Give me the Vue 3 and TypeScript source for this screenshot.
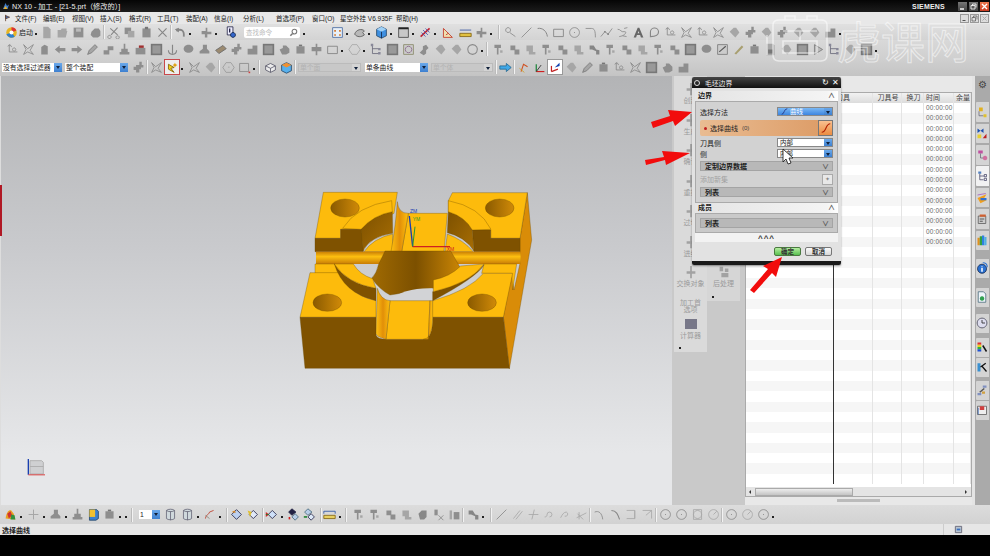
<template>
  <div class="app">
    <header class="titlebar">
      <svg class="applogo" viewBox="0 0 16 16"><path d="M2 14 7 2l3 6 4-3-3 9z" fill="#3f7fd0" /><path d="M7 8l4 6H3z" fill="#e8b030" /></svg>
      <span class="title">NX 10 - 加工 - [21-5.prt（修改的）]</span>
      <span class="siemens">SIEMENS</span>
      <span class="win">
        <svg viewBox="0 0 9 9"><path d="M2 7h4" stroke="#fff" stroke-width="1.4" /></svg>
      </span>
      <span class="win">
        <svg viewBox="0 0 9 9"><path d="M2 3.5h4v3.5H2zM3.5 3.5V2H7v3.5" fill="none" stroke="#fff" stroke-width=".8" /></svg>
      </span>
      <span class="win close">
        <svg viewBox="0 0 9 9"><path d="M2 2 7 7M7 2 2 7" stroke="#fff" stroke-width="1.4" /></svg>
      </span>
    </header>

    <nav class="menubar">
      <svg class="menuicon" viewBox="0 0 10 10"><path d="M2 1v8M2 2l5 2-5 2z" fill="#4070c0" stroke="#604030" /></svg>
      <span v-for="m in menus" :key="m.t" class="menu" :style="{ width: m.w + 'px' }">{{ m.t }}</span>
      <div class="mdi">
        <span><svg viewBox="0 0 7 7"><path d="M1.5 5.5h3" stroke="#555" /></svg></span>
        <span><svg viewBox="0 0 7 7"><path d="M1 2.5h3.5V6H1zM2.5 2.5V1H6v3.5" fill="none" stroke="#555" stroke-width=".7" /></svg></span>
        <span><svg viewBox="0 0 7 7"><path d="M1.5 1.5l4 4M5.5 1.5l-4 4" stroke="#aaa" /></svg></span>
      </div>
    </nav>

    <div v-for="(row, r) in topRows" :key="r" class="toolbar" :class="'tb' + r">
      <template v-for="(it, i) in row" :key="i">
        <span v-if="it.t === 'gap'" :style="{ width: it.w + 'px' }"></span>
        <span v-else-if="it.t === 'dot'" class="dot" :style="{ width: it.w + 'px' }"></span>
        <span v-else-if="it.t === 'sep'" class="sep"></span>
        <span v-else-if="it.t === 'start'" class="start">
          <svg viewBox="0 0 16 16" class="ic"><circle cx="8" cy="8" r="6.5" fill="#e6b422" /><path d="M8 1.5a6.5 6.5 0 0 1 6 4L8 8z" fill="#d33" /><path d="M1.8 10A6.5 6.5 0 0 0 12 13L8 8z" fill="#2c7fd0" /><circle cx="8" cy="8" r="2.5" fill="#fff" /></svg>
          启动
        </span>
        <span v-else-if="it.t === 'search'" class="search">
          <span>查找命令</span>
          <svg viewBox="0 0 10 10"><circle cx="6" cy="4" r="2.6" fill="none" stroke="#777" stroke-width="1.2" /><path d="M4 6 1.5 8.5" stroke="#777" stroke-width="1.6" /></svg>
        </span>
        <span v-else-if="it.t === 'sel'" class="sel" :class="{ off: it.off }" :style="{ width: it.w + 'px' }">
          <span class="seltxt">{{ it.text }}</span><span class="drop"></span>
        </span>
        <span v-else class="icon" :class="{ active: it.active, redbox: it.name === 'spark' }">
          <svg viewBox="0 0 16 16" class="ic">
            <path v-for="(l, k) in icons[it.name!]" :key="k" :d="l.d" :fill="l.f || 'none'" :stroke="l.s || 'none'" :stroke-width="l.w || 1" />
          </svg>
        </span>
      </template>
    </div>

    <main class="main">
      <section class="viewport">
        <span class="redmark"></span>
        <svg class="model" viewBox="0 0 750 600">
          <defs>
            <linearGradient id="hole" x1="0" x2="1" y1="0" y2="0">
              <stop offset="0" stop-color="#8a5a00" /><stop offset="1" stop-color="#d08a08" />
            </linearGradient>
            <linearGradient id="chan" x1="0" x2="0" y1="0" y2="1">
              <stop offset="0" stop-color="#c97e05" /><stop offset=".4" stop-color="#fdc010" /><stop offset="1" stop-color="#c87c05" />
            </linearGradient>
            <linearGradient id="slot" x1="0" x2="1" y1="0" y2="0">
              <stop offset="0" stop-color="#fdc010" /><stop offset=".5" stop-color="#e28f08" /><stop offset="1" stop-color="#fdc010" />
            </linearGradient>
            <linearGradient id="bore" x1="0" x2="1" y1="0" y2="0">
              <stop offset="0" stop-color="#a06a02" /><stop offset=".5" stop-color="#7c5000" /><stop offset="1" stop-color="#c98505" />
            </linearGradient>
            <linearGradient id="wall" x1="0" x2="1" y1="0" y2="1">
              <stop offset="0" stop-color="#7c5000" /><stop offset="1" stop-color="#a86e04" />
            </linearGradient>
          </defs>
          <g stroke="#6b4800" stroke-width="1">
            <path d="M690 175 712 38 725 180 658 567 640 410 665 282 672 330 690 250z" fill="#d98c08" />
            <path d="M100 37H322L312 100 215 148H152V175H75z" fill="#fdbb0c" />
            <path d="M75 175H152V148H215L220 215H75z" fill="#7f5200" />
            <path d="M222 215Q250 175 308 162V215z" fill="#fdbb0c" />
            <path d="M213 148Q250 105 307 95L308 160Q240 170 219 213z" fill="url(#wall)" />
            <path d="M158 145Q200 78 305 62L307 95Q250 105 213 148z" fill="#fdbb0c" />
            <path d="M487 38H712L690 175H602V150H547L475 95V62z" fill="#fdbb0c" />
            <path d="M602 175H690V215H552L547 150H602z" fill="#7f5200" />
            <path d="M472 162Q520 180 550 215H465z" fill="#fdbb0c" />
            <path d="M475 95Q525 110 547 150L552 213Q525 170 472 158z" fill="url(#wall)" />
            <path d="M475 62Q570 80 603 148L547 150Q525 110 475 95z" fill="#fdbb0c" />
            <path d="M355 100H472L462 215H335z" fill="#fdbb0c" />
            <path d="M322 65Q325 100 355 100L335 215H303Q318 130 322 65z" fill="url(#slot)" />
            <rect x="78" y="215" width="614" height="37" fill="url(#chan)" stroke="none" />
            <path d="M75 252H135L152 280H75zM582 252H680L668 330 665 280H575z" fill="#fdbb0c" />
            <path d="M285 213H482Q495 235 510 262Q480 300 430 325L300 345Q270 330 245 295Q260 280 265 255z" fill="url(#bore)" />
            <path d="M295 362Q345 322 428 325V365H300z" fill="#d2d3d6" stroke="none" />
            <path d="M60 278H148Q180 345 258 362V412H30z" fill="#fdbb0c" />
            <path d="M133 252Q170 310 258 325V362Q160 340 133 252z" fill="#7f5200" />
            <path d="M133 252H190Q210 285 248 296L258 325Q170 310 133 252z" fill="#fdbb0c" />
            <path d="M580 280H668L640 412H425L428 362Q540 330 580 280z" fill="#fdbb0c" />
            <path d="M582 255Q560 292 428 362V335Q530 310 582 255z" fill="#7f5200" />
            <path d="M512 258 582 252Q540 310 430 335V300Q480 290 512 258z" fill="#fdbb0c" />
            <path d="M30 412H258V465Q262 478 290 478H400Q428 478 428 412H640L658 565H45z" fill="#7f5200" />
            <path d="M300 362H420L415 478H288z" fill="#fdbb0c" />
            <path d="M262 325Q272 360 300 362L288 478Q258 470 258 460z" fill="url(#slot)" />
            <path d="M420 362H428V412Q428 478 400 478H415z" fill="url(#slot)" />
          </g>
          <ellipse cx="165" cy="84" rx="43" ry="27" fill="url(#hole)" stroke="#6b4800" />
          <ellipse cx="629" cy="84" rx="43" ry="27" fill="url(#hole)" stroke="#6b4800" />
          <ellipse cx="112" cy="368" rx="43" ry="26" fill="url(#hole)" stroke="#6b4800" />
          <ellipse cx="576" cy="368" rx="43" ry="26" fill="url(#hole)" stroke="#6b4800" />
          <path d="M368 200 358 108" stroke="#1a3fb0" stroke-width="4" />
          <path d="M368 200 375 140" stroke="#2a9a30" stroke-width="3" />
          <path d="M368 200H480" stroke="#d02020" stroke-width="4" />
          <text x="360" y="100" class="axis" fill="#1a3fb0">ZM</text>
          <text x="368" y="122" class="axis" fill="#2a9a30">YM</text>
          <text x="470" y="212" class="axis" fill="#d02020">XM</text>
        </svg>
        <svg class="triad" viewBox="0 0 30 26">
          <path d="M6 3h14l2 2v14H6z" fill="#cfd0d2" stroke="#aaa" />
          <path d="M6 10h16" stroke="#aaa" />
          <path d="M4 20V1" stroke="#1a3fb0" stroke-width="1.6" />
          <path d="M4 20H24" stroke="#d84040" stroke-width="1.2" />
        </svg>
      </section>

      <aside class="respanel">
        <div class="col col1">
          <div v-for="t in resLeft" :key="t" class="res">
            <svg viewBox="0 0 16 16" class="resic"><path d="M7 1h2v6h4v3H9v5H7v-5H3V7h4z" fill="#a2a2a2" /></svg>
            <span>{{ t }}</span>
          </div>
          <div class="res pref"><span>加工首选项</span></div>
          <div class="res">
            <span class="calc"></span>
            <span>计算器</span>
          </div>
          <span class="tick"></span>
        </div>
        <div class="col col2">
          <div class="res">
            <svg viewBox="0 0 16 16" class="resic"><path d="M3 2h4v5H3zM9 4h4v4H9zM5 9h8v5H5z" fill="#a2a2a2" /></svg>
            <span>后处理</span>
          </div>
          <span class="tick"></span>
        </div>
      </aside>

      <section class="navigator">
        <div class="tablewrap">
          <div class="grid">
            <div class="row head">
              <span class="cell name"></span>
              <span class="cell c1">刀具</span>
              <span class="cell c2">刀具号</span>
              <span class="cell c3">换刀</span>
              <span class="cell c4">时间</span>
              <span class="cell c5">余量</span>
            </div>
            <div v-for="n in 37" :key="n" class="row" :class="{ alt: n % 2 === 0 }">
              <span class="cell name"></span>
              <span class="cell c1"></span>
              <span class="cell c2"></span>
              <span class="cell c3"></span>
              <span class="cell c4 time">{{ n <= 14 ? '00:00:00' : '' }}</span>
              <span class="cell c5"></span>
            </div>
          </div>
          <div class="hscroll">
            <span class="arrow left"></span>
            <span class="thumb"></span>
            <span class="arrow right"></span>
          </div>
        </div>
        <div class="splitter"><span></span></div>
      </section>

      <aside class="sidebar">
        <div class="gear">⚙</div>
        <div v-for="(t, i) in sideTabs" :key="i" class="tab" :class="{ on: t.on }" :style="{ marginTop: t.gap + 'px' }">
          <svg viewBox="0 0 16 16">
            <path v-for="(l, k) in icons[t.name]" :key="k" :d="l.d" :fill="l.f || 'none'" :stroke="l.s || 'none'" :stroke-width="l.w || 1" />
          </svg>
        </div>
      </aside>
    </main>

    <div class="toolbar bottom">
      <template v-for="(it, i) in bottomRow" :key="i">
        <span v-if="it.t === 'gap'" :style="{ width: it.w + 'px' }"></span>
        <span v-else-if="it.t === 'dot'" class="dot" :style="{ width: it.w + 'px' }"></span>
        <span v-else-if="it.t === 'sep'" class="sep"></span>
        <span v-else-if="it.t === 'sel'" class="sel" :style="{ width: it.w + 'px' }">
          <span class="seltxt">{{ it.text }}</span><span class="drop"></span>
        </span>
        <span v-else class="icon">
          <svg viewBox="0 0 16 16" class="ic">
            <path v-for="(l, k) in icons[it.name!]" :key="k" :d="l.d" :fill="l.f || 'none'" :stroke="l.s || 'none'" :stroke-width="l.w || 1" />
          </svg>
        </span>
      </template>
    </div>

    <footer class="status">
      <span class="statustxt">选择曲线</span>
      <span class="statusbox">
        <svg viewBox="0 0 10 10"><path d="M1.5 1.5h7v7h-7z" fill="#b8c4d0" stroke="#667" /><path d="M3 4h4v2H3z" fill="#3a70c0" /></svg>
      </span>
    </footer>
    <div class="blackbar"></div>

    <!-- dialog floats over the navigator -->
    <div class="dialog">
      <div class="dlgtitle">
        <span class="dlgring"></span>
        <span class="dlgname">毛坯边界</span>
        <span class="dlgbtn">↻</span>
        <span class="dlgbtn">✕</span>
      </div>
      <div class="dlgbody">
        <div class="sechead"><span>边界</span><span class="chev">∧</span></div>
        <div class="secbody first">
          <div class="frow">
            <label>选择方法</label>
            <span class="dsel blue"><svg viewBox="0 0 10 10"><path d="M1 9C5 9 4 1 9 1" fill="none" stroke="#203080" stroke-width="1.2" /></svg><em>曲线</em><span class="drop"></span></span>
          </div>
          <div class="pick">
            <i></i><span>选择曲线</span><small>(0)</small>
            <span class="pickbtn"><svg viewBox="0 0 14 14"><path d="M2 12C8 12 6 2 12 2" fill="none" stroke="#b02000" stroke-width="1.3" /></svg></span>
          </div>
          <div class="frow">
            <label>刀具侧</label>
            <span class="dsel"><em>内部</em><span class="drop"></span></span>
          </div>
          <div class="frow">
            <label>侧</label>
            <span class="dsel"><em>内部</em><span class="drop"></span></span>
          </div>
          <div class="bar"><span>定制边界数据</span><span class="chev">∨</span></div>
          <div class="frow addset">
            <label>添加新集</label>
            <span class="addbtn">✦</span>
          </div>
          <div class="bar"><span>列表</span><span class="chev">∨</span></div>
        </div>
        <div class="sechead"><span>成员</span><span class="chev">∧</span></div>
        <div class="secbody second">
          <div class="bar"><span>列表</span><span class="chev">∨</span></div>
        </div>
        <div class="more">^^^</div>
        <div class="dlgfoot">
          <button class="ok">确定</button>
          <button>取消</button>
        </div>
      </div>
      <div class="dlgend"></div>
    </div>

    <!-- annotation arrows -->
    <svg class="arrows" viewBox="0 0 990 556">
      <path d="M651 122 670 116 668 110 692 112 675 126 673 121 653 128z" fill="#f20c0c" />
      <path d="M645 160 664 157 662 151 690 153 666 165 665 160 646 165z" fill="#f20c0c" />
      <path d="M750 290 768 269 763 266 782 257 776 277 772 273 754 293z" fill="#f20c0c" />
      <path d="M783 149V162L786 159 788 164 791 163 789 158 793 158z" fill="#fff" stroke="#111" stroke-width=".8" />
    </svg>

    <div class="watermark">
      <svg viewBox="0 0 70 50" class="wmlogo">
        <path d="M8 10Q8 5 14 5H56Q62 5 62 10V40Q62 46 56 46H14Q8 46 8 40zM20 5V1H30V5M42 5V1H52V5M18 16H52M18 26H52V38H18zM2 20V40M35 16V26" fill="none" stroke="#fff" stroke-width="1.6" />
      </svg>
      <span>虎课网</span>
    </div>
  </div>
</template>

<script setup lang="ts">
interface Layer {
  d: string
  f?: string
  s?: string
  w?: number
}

interface Item {
  t: string
  w?: number
  name?: string
  text?: string
  off?: boolean
  active?: boolean
}

const G = '#8e8e8e'
const L = '#a6a6a6'
const O = '#868686'

const icons: Record<string, Layer[]> = {
  doc: [{ d: 'M4 1h6l3 3v11H4z', f: L }],
  folder: [{ d: 'M2 5h4l1-2h6v3h1l-2 8H2z', f: L }],
  save: [{ d: 'M2 2h12v12H2z', f: G }, { d: 'M5 3h6v4H5z', f: '#bbb' }],
  blob: [{ d: 'M3 7l4-4h5l2 3v6l-3 2H5L2 11z', f: G }],
  cut: [{ d: 'M13 2 5 11M4 3l9 8', s: O, w: 1.3 }, { d: 'M3 11.5a2 2 0 1 0 .1 0zM13 12a2 2 0 1 0 .1 0z', s: O }],
  copy: [{ d: 'M2 2h8v8H2z', f: G }, { d: 'M6 6h8v8H6z', f: L }],
  paste: [{ d: 'M3 3h10v11H3z', f: G }, { d: 'M6 1h4v3H6z', f: '#777' }],
  x: [{ d: 'M3 3 13 13M13 3 3 13', s: O, w: 1.4 }],
  undo: [{ d: 'M3 6c5-3 10-1 9 7', s: O, w: 2.2 }, { d: 'M1 4l5-2v6z', f: O }],
  tool: [{ d: 'M2 6h5V2h2v5h5v3H9v4H6v-4H2z', f: G }],
  info: [{ d: 'M4 1h7v10H4z', f: '#eef', s: '#224' }, { d: 'M7 3v5', s: '#224', w: 1.6 }, { d: 'M11 8a3 3 0 1 0 .1 0z', f: '#36c', s: '#124' }],
  table: [{ d: 'M2 2h12v12H2z', f: '#e8f0f8', s: '#4468a0' }, { d: 'M4 5h2v2H4zM10 5h2v2h-2zM4 10h2v2H4zM10 10h2v2h-2z', f: '#d07020' }],
  bowl: [{ d: 'M2 10c2-6 9-7 12-4l-2 2 2 3c-4 3-9 3-12-1z', f: '#b8b8b8', s: '#555' }],
  cube: [{ d: 'M8 1l6 3v8l-6 3-6-3V4z', f: '#3e8fe0', s: '#246' }, { d: 'M2 4l6 3 6-3-6-3z', f: '#9fd0f5' }, { d: 'M8 7v8', s: '#124' }],
  box: [{ d: 'M2 2h12v12H2z', f: '#c8c8c8', s: '#444' }, { d: 'M2 2h12v2H2z', f: '#222' }],
  ribbon: [{ d: 'M2 13 13 3', s: '#c02030', w: 2 }, { d: 'M5 5l6 6M8 3l5 5M3 8l5 5', s: '#4050b0' }],
  tri: [{ d: 'M3 14V3l11 11z', f: '#f0e0b0', s: '#c03020' }, { d: 'M6 11l3-2', s: '#c03020' }],
  dims: [{ d: 'M1 5h14', s: '#3050a0' }, { d: 'M1 9h14v4H1z', f: '#e0c040', s: '#806010' }],
  valve: [{ d: 'M9 1h3v4h2v3h-3v2H9v4H5v-3H2V7h3V5h4z', f: G }],
  ring: [{ d: 'M5 2a3 3 0 1 0 .1 0z', s: O }, { d: 'M7 8l7 5', s: O }],
  line: [{ d: 'M2 14 14 2', s: O }],
  arc: [{ d: 'M2 3c6-1 11 3 12 10', s: O, w: 1.2 }],
  rect: [{ d: 'M2 4h12v9H2z', s: O, w: 1.1 }],
  cdot: [{ d: 'M8 2a6 6 0 1 0 .1 0z', s: O }, { d: 'M7.5 7.5h1v1h-1z', f: O }],
  hook: [{ d: 'M2 3h7c4 0 5 3 5 11', s: O }],
  node: [{ d: 'M1 13l5-6 4 3 5-7', s: O }, { d: 'M5 6h2v2H5zM9 9h2v2H9z', f: O }],
  wave: [{ d: 'M2 4c4 0 4 4 8 3s2 5-6 6M10 3l4-1M8 12l5 1', s: O }],
  a: [{ d: 'M2 14 7 2h2l5 12h-3l-1-3H6l-1 3zM7 9h2L8 6z', f: '#666' }],
  swirl: [{ d: 'M3 8a5 5 0 0 1 10-1c0 5-4 6-10 6z', s: O, w: 1.4 }],
  sketch: [{ d: 'M4 2v9h10M2 4l3-2 2 3M10 6a2 2 0 1 0 .1 0z', s: O }],
  star: [{ d: 'M2 2l5 5 7-5-4 7 4 5-7-3-5 3 3-6z', s: O }],
  bolt: [{ d: 'M4 14V5l4-3 4 2v10z', f: G }],
  larr: [{ d: 'M1 8l6-5v3h7v4H7v3z', f: G }],
  rarr: [{ d: 'M15 8 9 3v3H2v4h7v3z', f: G }],
  pen: [{ d: 'M2 14l2-5 7-7 3 3-7 7z', f: L, s: '#777' }],
  steps: [{ d: 'M2 14V9h5V4h7v5H9v5z', f: G }],
  stamp: [{ d: 'M7 1h2v6h3v4h2v3H2v-3h2V7h3z', f: G }],
  gift: [{ d: 'M2 6h12v8H2z', f: G }, { d: 'M6 3h6v3H6z', f: '#a03030' }],
  square: [{ d: 'M1 1h14v14H1z', f: '#777' }, { d: 'M3 3h10v10H3z', f: '#999' }],
  anchor: [{ d: 'M8 2v11M3 9c0 3 2 5 5 5s5-2 5-5', s: O, w: 1.4 }],
  bub: [{ d: 'M2 7c0-3 3-5 6-5s6 2 6 5-3 5-6 5-6-2-6-5z', f: G }],
  cone: [{ d: 'M6 2h5v5l3 3v3H2v-3l4-3z', f: G }],
  brick: [{ d: 'M2 9l9-6 4 4-9 6z', f: '#9b8a70', s: '#666' }],
  blocks: [{ d: 'M2 7h6v7H2zM8 3h6v11H8z', f: G }],
  hand: [{ d: 'M2 8l4-2V3h4l4 4v5l-4 2H5z', f: G }],
  cross: [{ d: 'M7 1h2v4h5v5H9v5H7v-5H2V5h5z', f: G }],
  hex: [{ d: 'M5 2h6l4 6-4 6H5L1 8z', s: L }],
  tree: [{ d: 'M3 2v11h8M3 7h8', s: '#667' }, { d: 'M1 1h3v3H1zM10 6h3v3h-3zM10 11h3v3h-3z', f: '#889' }],
  sqc: [{ d: 'M2 2h12v12H2z', f: '#ccc', s: '#886' }, { d: 'M8 4a4 4 0 1 0 .1 0z', s: '#868' }],
  pipe: [{ d: 'M2 12 6 8V4l4-2 3 4-3 3v4l-3 2z', f: G }],
  tag: [{ d: 'M2 7l5-5h3l4 6-5 6z', f: L }],
  circ: [{ d: 'M8 2a6 6 0 1 0 .1 0z', s: '#888', w: 1.3 }],
  note: [{ d: 'M3 1h8l2 2v12H3z', f: L }, { d: 'M5 8h6v5H5z', f: '#777' }],
  chk: [{ d: 'M2 14V2h12v12z', f: '#ccc', s: '#777' }, { d: 'M4 11 12 4', s: '#555', w: 1.3 }],
  pencil: [{ d: 'M3 13 12 3l2 2-9 9z', f: '#a89f70' }],
  play: [{ d: 'M3 2v12l10-6z', f: '#bbb', s: '#777' }],
  rarrb: [{ d: 'M15 8 9 3v3H1v4h8v3z', f: '#3fa8e8', s: '#22668f' }],
  spark: [{ d: 'M3 4l7 4-4 1 4 5-7-4z', f: '#f0d020', s: '#806000' }, { d: 'M11 2l1 2 2 1-2 1-1 2-1-2-2-1 2-1z', f: '#e0a010' }],
  wcs1: [{ d: 'M5 13 8 4l5 3', s: '#d05020', w: 1.3 }, { d: 'M3 9l6 5', s: '#d0a020' }],
  wcs2: [{ d: 'M4 13V4', s: '#108030', w: 1.4 }, { d: 'M4 13h10', s: '#d02020', w: 1.4 }, { d: 'M4 13 10 5', s: '#222' }],
  wcs3: [{ d: 'M3 13 3 6', s: '#c02020', w: 1.5 }, { d: 'M3 13l8-3', s: '#c02020', w: 1.5 }, { d: 'M7 8l6-6v4z', f: '#1040b0' }],
  iso: [{ d: 'M2 6l6-3 6 3v5l-6 3-6-3z', f: '#ececec', s: '#556' }, { d: 'M2 6l6 3 6-3M8 9v5', s: '#556' }],
  iso2: [{ d: 'M2 5l6-3 6 3v7l-6 3-6-3z', f: '#58b0ec', s: '#246' }, { d: 'M2 5l6 3 6-3-6-3z', f: '#f09030' }],
  dotsq: [{ d: 'M2 3h11v10H2z', s: '#888' }, { d: 'M13 13h2v2h-2z', f: '#d04040' }],
  hexdot: [{ d: 'M5 2h6l4 6-4 6H5L1 8z', s: '#999' }, { d: 'M8 7h1v1H8z', f: '#777' }],
  flag: [{ d: 'M2 13C3 5 6 2 9 3l3 4 2 7z', f: '#e8a020' }, { d: 'M4 7l4-3 2 5-4 4z', f: '#d03030' }, { d: 'M9 8l4 1 1 5H8z', f: '#309040' }],
  plus: [{ d: 'M8 2v12M2 8h12', s: L, w: 1.2 }],
  cube2: [{ d: 'M3 2h9l2 2v9l-3 2H3z', f: '#3a80d0', s: '#246' }, { d: 'M3 2h7v9H3z', f: '#f0c030' }],
  can: [{ d: 'M3 3c2-2 8-2 10 0v10c-2 2-8 2-10 0z', f: '#cfd8dc', s: '#667' }, { d: 'M3 3c2 2 8 2 10 0M8 4v11', s: '#667' }],
  curve: [{ d: 'M3 13C4 7 7 9 8 5l5-2', s: '#c05040', w: 1.2 }, { d: 'M3 9l5 4', s: '#887' }],
  dia1: [{ d: 'M8 2l6 6-6 6-6-6z', f: '#bcd0f0', s: '#224' }, { d: 'M2 5l4-2 1 3z', f: '#d08020' }],
  dia2: [{ d: 'M9 3l5 5-5 5-5-5z', f: '#e0e8f8', s: '#224' }, { d: 'M2 3l5 2-2 6z', f: '#e0c030' }],
  dia3: [{ d: 'M9 3l5 5-5 5-5-5z', f: '#cfe0f8', s: '#224' }, { d: 'M1 5l4 3-4 3z', f: '#d02020' }, { d: 'M1 8h4', s: '#208030' }],
  dia4: [{ d: 'M6 1l5 4-5 4-4-4z', f: '#224', s: '#224' }, { d: 'M10 7l4 4-4 4-4-4z', f: '#b8cde8', s: '#467' }, { d: 'M3 11v3', s: '#d02020', w: 2 }],
  dia5: [{ d: 'M6 1l5 4-5 4-4-4z', f: '#b8cde8', s: '#467' }, { d: 'M10 7l4 4-4 4-4-4z', f: '#dce8f8', s: '#224' }, { d: 'M1 11h4', s: '#208030', w: 2 }],
  dimy: [{ d: 'M1 4h14M1 4v3M15 4v3', s: '#2850a0' }, { d: 'M1 9h14v4H1z', f: '#e8d060', s: '#806010' }],
  gr1: [{ d: 'M3 2h8v4H8v8H6V6H3z', f: G }, { d: 'M10 9h3v3h-3z', f: L }],
  gr2: [{ d: 'M3 3h6v5h5v6H8V9H3z', f: G }],
  gr3: [{ d: 'M3 3h8v8h3v3H6v-4H3z', f: L }],
  gr4: [{ d: 'M3 7l4-4h6v8l-3 3H5z', f: '#888' }],
  grx: [{ d: 'M3 2h4v7H3z', f: G }, { d: 'M8 9l6 6M14 9l-6 6', s: O }],
  grb: [{ d: 'M2 3h3v11H2z', f: L }, { d: 'M7 5h7v9H7z', f: G }],
  fold: [{ d: 'M2 3h5l3 5 4 1v5h-4V10L5 8H2z', f: O }],
  trim: [{ d: 'M2 12l12-6M3 7l7 7M5 5v9', s: L }],
  par: [{ d: 'M3 13 11 3M6 14l8-10', s: L }],
  xl: [{ d: 'M2 8h12M9 2 6 14', s: L }],
  fil: [{ d: 'M2 11c2 0 3-1 3-3a3 3 0 1 1 3 3', s: L }],
  fil2: [{ d: 'M2 12c2-4 4-7 7-7a2.5 2.5 0 1 1-2 5', s: L }],
  ch1: [{ d: 'M2 5c5-2 9 1 10 9', s: O }],
  ch2: [{ d: 'M3 3c6 0 8 5 10 11', s: O, w: 1.3 }],
  ch3: [{ d: 'M2 3h10v10H2M12 3v10', s: L }],
  ch4: [{ d: 'M2 3h11v10M6 9l7-6', s: L }],
  csq: [{ d: 'M3 2h10v12H3z', s: L }, { d: 'M8 3a5 5 0 1 0 .1 0z', s: L }],
  cline: [{ d: 'M8 2a6 6 0 1 0 .1 0z', s: L }, { d: 'M8 8l4-4', s: L }],
  tank: [{ d: 'M3 4h10v9H3z', f: G }, { d: 'M6 2h4v2H6z', f: '#777' }],
  tab1: [{ d: 'M4 2h5v5H4z', f: '#e0b020' }, { d: 'M4 7v6h6', s: '#667' }, { d: 'M10 11h4v4h-4z', f: '#e0c030' }],
  tab2: [{ d: 'M2 2l4 3 4-3v6l-4-3-4 3z', f: '#1a50b0' }, { d: 'M2 10h5v5H2z', f: '#e8d030' }, { d: 'M9 15l5-6v6z', f: '#c02020' }],
  tab3: [{ d: 'M3 2h6v4H3z', f: '#c050a0' }, { d: 'M6 6v6h4', s: '#667' }, { d: 'M12 9a3 3 0 1 0 .1 0z', f: '#d070a0' }],
  tab4: [{ d: 'M3 2h4v3H3z', f: '#5080c0' }, { d: 'M5 5v8h5M5 8h6', s: '#446' }, { d: 'M11 6h3v3h-3zM11 11h3v3h-3z', s: '#446' }],
  tab5: [{ d: 'M2 8l12-5-3 5 3 3-8 4z', f: '#f0a020' }, { d: 'M6 8h8v3H6z', f: '#3070d0' }, { d: 'M2 4l11-2', s: '#a050c0' }],
  tab6: [{ d: 'M3 4h10v10H3z', f: '#ccc', s: '#555' }, { d: 'M5 2h8v3H5z', f: '#d06030' }, { d: 'M5 8h6M5 11h4', s: '#333' }],
  tab7: [{ d: 'M2 5h3v10H2z', f: '#e09020' }, { d: 'M5 3h3v12H5z', f: '#30a040' }, { d: 'M8 2h3v13H8z', f: '#3080e0' }, { d: 'M11 4h3v11h-3z', f: '#50b0e0' }],
  tab8: [{ d: 'M8 3a6 6 0 1 0 .1 0z', f: '#2a70d0', s: '#124' }, { d: 'M7 6h2v1H7zM7 8h2v5H7z', f: '#fff' }, { d: 'M9 1c4 0 6 3 6 6', s: '#2a70d0', w: 1.4 }],
  tab9: [{ d: 'M3 1h7l3 3v11H3z', f: '#eef4fa', s: '#467' }, { d: 'M8 7a3 3 0 1 0 .1 0z', f: '#30a050' }],
  tab10: [{ d: 'M8 1.5a6.5 6.5 0 1 0 .1 0z', f: '#dde', s: '#556', w: 1.2 }, { d: 'M8 4v4h4', s: '#333', w: 1.2 }],
  tab11: [{ d: 'M2 2h5v3H2z', f: '#e03030' }, { d: 'M2 5h5v3H2z', f: '#e8d020' }, { d: 'M2 8h5v3H2z', f: '#30b040' }, { d: 'M2 11h5v3H2z', f: '#2050d0' }, { d: 'M9 6l5 8', s: '#111', w: 2 }],
  tab12: [{ d: 'M2 3h4v11H2z', f: '#3a90d0' }, { d: 'M6 8l7-5M8 7l6 7', s: '#111', w: 1.7 }],
  tab13: [{ d: 'M2 12h5v3H2zM9 2h5v3H9z', f: '#8090c0' }, { d: 'M5 11 11 6', s: '#555', w: 2 }, { d: 'M8 10h4v3H8z', f: '#d0a040' }],
  tab14: [{ d: 'M2 3h12v11H2z', f: '#eee', s: '#555' }, { d: 'M5 3h6v5H5z', f: '#d04040' }, { d: 'M3 5v9', s: '#3060b0' }],
}

const menus = [
  { t: '文件(F)', w: 28 }, { t: '编辑(E)', w: 29 }, { t: '视图(V)', w: 28 }, { t: '插入(S)', w: 29 },
  { t: '格式(R)', w: 28 }, { t: '工具(T)', w: 29 }, { t: '装配(A)', w: 28 }, { t: '信息(I)', w: 29 },
  { t: '分析(L)', w: 33 }, { t: '首选项(P)', w: 36 }, { t: '窗口(O)', w: 28 }, { t: '星空外挂 V6.935F', w: 56 }, { t: '帮助(H)', w: 30 },
]

const resLeft = ['创建', '生成', '确认', '重播', '过切', '进给', '交换对象']

const sideTabs = [
  { name: 'tab1', gap: 7.25 }, { name: 'tab2', gap: 1.9 }, { name: 'tab3', gap: 1.9 }, { name: 'tab4', gap: 1.9, on: true },
  { name: 'tab5', gap: 1.9 }, { name: 'tab6', gap: 1.9 }, { name: 'tab7', gap: 1.9 }, { name: 'tab8', gap: 8.5 },
  { name: 'tab9', gap: 9.5 }, { name: 'tab10', gap: 6.5 }, { name: 'tab11', gap: 4.5 }, { name: 'tab12', gap: 0.5 },
  { name: 'tab13', gap: 3.5 }, { name: 'tab14', gap: 0.5 },
].map(t => ({ on: false, ...t }))

// small row language: name, "." dropdown dot, "_n" gap, "|" separator, "sel:w:text"
const parse = (src: string): Item[] =>
  src.trim().split(/\s+/).map(tok => {
    if (tok[0] === '_') return { t: 'gap', w: Number(tok.slice(1)) }
    if (tok[0] === '.') return { t: 'dot', w: Number(tok.slice(1)) || 6 }
    if (tok === '|') return { t: 'sep' }
    if (tok === 'start' || tok === 'search') return { t: tok }
    if (tok.startsWith('sel:') || tok.startsWith('off:')) {
      const [kind, w, text] = tok.split(':')
      return { t: 'sel', w: Number(w), text, off: kind === 'off' }
    }
    if (tok.endsWith('!')) return { t: 'icon', name: tok.slice(0, -1), active: true }
    return { t: 'icon', name: tok }
  })

const topRows = [
  parse(`_5 start .4 doc folder save _1 blob | cut copy _1 paste x | undo . _4 tool . _2 info _6 search _2 . _21
    table . bowl . cube . box . ribbon . tri _2 dims tool . _3 | _2 ring line arc rect cdot hook node wave a swirl
    sketch star sketch star tag valve tag valve tag tag blocks .`),
  parse(`_4 sketch star bolt larr rarr pen steps stamp gift square anchor bub cone brick valve blocks square hand tank
    cross rect . hex . tree square sqc pipe tag tag circ . | _2 gr1 gr2 gr3 gr1 gr2 gr3 fold gr1 gr2 gr3 gr1 gr2
    square bub chk pencil tank note tag square play tree tag square .`),
  parse(`_2 sel:60:没有选择过滤器 _3 sel:63:整个装配 _2 valve | star spark . star tag | hexdot dotsq . | _2 iso iso2 | _2
    off:63:单个面 _4 sel:63:单条曲线 _3 off:62:单个体 _2 | rarrb | wcs1 wcs2 wcs3! tag pen tank sketch star square hand blocks`),
]

const bottomRow = parse(`_3 flag . _1 plus .1 _5 cone . stamp cube2 tank . . _2 | _6 sel:21:1 _3 can _1 can . curve . _2 | _1
  dia1 dia2 _1 | dia3 . dia4 dia5 _2 | dimy . _1 | _4 gr1 gr1 gr2 gr3 gr4 grx grb | _1 fold . _3 | _1 line par xl fil fil2 trim |
  ch1 ch2 ch3 ch4 | cdot cdot csq cline | cdot cline cdot .`)
</script>

<style scoped>
.app {
  width: 990px;
  height: 556px;
  display: flex;
  flex-direction: column;
  position: relative;
  overflow: hidden;
  background: #000;
  font-family: "Liberation Sans", "Noto Sans CJK SC", sans-serif;
  color: #222;
}

.titlebar {
  height: 12px;
  flex: none;
  display: flex;
  align-items: center;
  background: linear-gradient(#050505, #1c1c1c);
  color: #eee;
  font-size: 7.2px;
  padding-left: 2px;
}
.applogo { width: 8px; height: 8px; margin-right: 2px; }
.title { flex: 1; }
.siemens { font-weight: 700; font-size: 7px; letter-spacing: .2px; margin-right: 13px; }
.win {
  width: 9px;
  height: 9px;
  margin-right: 2px;
  background: linear-gradient(#777, #444);
  display: flex;
}
.win svg { width: 9px; height: 9px; }
.win.close { background: linear-gradient(#ec7a50, #c83a20); margin-right: 1px; }

.menubar {
  height: 12px;
  flex: none;
  display: flex;
  align-items: center;
  background: #e8e8e8;
  font-size: 6.5px;
  padding-left: 4px;
}
.menuicon { width: 8px; height: 8px; margin-right: 3px; }
.menu { flex: none; white-space: nowrap; }
.mdi { margin-left: auto; display: flex; gap: 1px; margin-right: 1px; }
.mdi span {
  width: 9px;
  height: 9px;
  box-sizing: border-box;
  border: 1px solid #999;
  background: #ddd;
  display: flex;
}
.mdi svg { width: 7px; height: 7px; }

.toolbar {
  flex: none;
  display: flex;
  align-items: center;
  overflow: hidden;
  background: linear-gradient(#e0e0e0, #d3d3d3);
}
.tb0 { height: 16px; }
.tb1 { height: 18px; background: linear-gradient(#d9d9d9, #d0d0d0); }
.tb2 { height: 18px; background: linear-gradient(#d0d0d0, #c4c4c4); }
.bottom { height: 19px; background: linear-gradient(#dcdcdc, #d2d2d2); padding-right: 213px; box-sizing: border-box; }

.icon {
  flex: none;
  width: 16px;
  height: 16px;
  display: flex;
  align-items: center;
  justify-content: center;
}
.ic { width: 13px; height: 13px; }
.icon.active { background: #fff; box-shadow: 0 0 0 1px #999 inset; }
.icon.redbox { box-shadow: 0 0 0 1px #c8484c inset; background: #eee; }
.dot { flex: none; height: 16px; position: relative; }
.dot::after {
  content: "";
  position: absolute;
  left: 1px;
  top: 9px;
  width: 2px;
  height: 2px;
  background: #222;
}
.sep { flex: none; width: 2px; height: 14px; border-left: 1px solid #bbb; border-right: 1px solid #f2f2f2; box-sizing: border-box; }

.start { flex: none; display: flex; align-items: center; gap: 1px; width: 29px; font-size: 7px; white-space: nowrap; }
.search {
  flex: none;
  width: 56px;
  height: 11px;
  background: #fff;
  border-radius: 2px;
  display: flex;
  align-items: center;
  justify-content: space-between;
  font-size: 6.5px;
  color: #bbb;
  padding: 0 2px;
  box-sizing: border-box;
}
.search svg { width: 9px; height: 9px; }

.sel {
  flex: none;
  height: 9px;
  display: flex;
  align-items: center;
  background: #fff;
  font-size: 6.8px;
  box-sizing: border-box;
  overflow: hidden;
}
.seltxt { flex: 1; white-space: nowrap; overflow: hidden; padding-left: 1px; }
.sel.off { background: #c8c8c8; border: 1px solid #bbb; color: #b2b2b2; }
.sel.off .drop { background: #d4d4d4; }
.drop {
  flex: none;
  width: 8px;
  height: 100%;
  background: linear-gradient(#6aa8ea, #3d80d0);
  position: relative;
}
.drop::after {
  content: "";
  position: absolute;
  left: 1.5px;
  top: 3px;
  border: 2.5px solid transparent;
  border-top: 3px solid #10203a;
}

.main {
  flex: 0 0 429px;
  min-height: 0;
  display: flex;
}

.viewport {
  flex: 0 0 672px;
  position: relative;
  background: linear-gradient(#b3b4b6, #c9cacd 40%, #e6e7e9 88%);
  border-left: 1px solid #ddd;
  box-sizing: border-box;
}
.redmark {
  position: absolute;
  left: -1px;
  top: 109px;
  width: 2px;
  height: 51px;
  background: #b01824;
}
.model {
  position: absolute;
  left: 289px;
  top: 104px;
  width: 250px;
  height: 200px;
}
.axis { font-size: 15px; font-family: "Liberation Sans", sans-serif; }
.triad {
  position: absolute;
  left: 24px;
  top: 382px;
  width: 25px;
  height: 22px;
}

.respanel {
  flex: 0 0 73px;
  display: flex;
  align-items: flex-start;
  background: #c9c9c9;
  padding-left: 2px;
  box-sizing: border-box;
  font-size: 7px;
  color: #9a9a9a;
}
.col {
  position: relative;
  background: #dadada;
  box-sizing: border-box;
  text-align: center;
}
.col1 { width: 33px; height: 276px; padding-top: 6px; }
.col2 { width: 33px; height: 225px; padding-top: 189px; background: linear-gradient(#c9c9c9 185px, #d6d6d6 185px); }
.res {
  height: 30.5px;
  display: flex;
  flex-direction: column;
  align-items: center;
  line-height: 9px;
}
.res.pref { height: 23px; padding: 3px 4px 0; box-sizing: border-box; line-height: 7px; }
.resic { width: 14px; height: 14px; flex: none; }
.calc { width: 12px; height: 10px; background: #778; margin-bottom: 2px; flex: none; }
.tick { position: absolute; left: 5px; bottom: 3px; width: 2px; height: 2px; background: #222; }

.navigator {
  flex: 0 0 227px;
  display: flex;
  flex-direction: column;
  background: #e8e8e8;
  padding-top: 16px;
  box-sizing: border-box;
}
.tablewrap {
  height: 405px;
  display: flex;
  flex-direction: column;
  border: 1px solid #aaa;
  box-sizing: border-box;
  background: #fff;
}
.grid { flex: 1; overflow: hidden; min-height: 0; }
.row { display: flex; height: 10.3px; }
.row.alt { background: #f6f6f6; }
.row.head { height: 10px; background: linear-gradient(#f2f2f2, #dcdcdc); font-size: 7px; color: #444; }
.cell { flex: none; border-right: 1px solid #e4e4e4; box-sizing: border-box; line-height: 10px; padding-left: 2px; overflow: hidden; white-space: nowrap; }
.cell.name { width: 88px; border-right: 1px solid #333; }
.c1 { width: 39px; }
.c2 { width: 29px; text-align: center; }
.c3 { width: 22px; text-align: center; }
.c4 { width: 30px; }
.c5 { width: 17px; }
.time { font-size: 6.4px; color: #666; letter-spacing: .2px; padding-left: 2px; }
.hscroll {
  flex: none;
  height: 9px;
  display: flex;
  align-items: center;
  background: #e4e4e4;
  position: relative;
  padding-left: 9px;
}
.thumb {
  width: 98px;
  height: 8px;
  background: linear-gradient(#ededed, #c4c4c4);
  border: 1px solid #aaa;
  box-sizing: border-box;
}
.arrow { position: absolute; top: 3px; border: 2px solid transparent; }
.arrow.left { left: 1px; border-right-color: #333; }
.arrow.right { right: 2px; border-left-color: #333; }
.splitter { flex: 1; display: flex; justify-content: center; padding-top: 2px; }
.splitter span { width: 43px; height: 3px; background: #bbb; }

.sidebar {
  flex: 0 0 18px;
  background: linear-gradient(90deg, #e4e4e4 3px, #aaaaaa 3px);
  padding-left: 4px;
  box-sizing: border-box;
}
.gear { height: 19px; font-size: 10px; line-height: 18px; color: #444; text-align: center; width: 12px; }
.tab {
  width: 12.5px;
  height: 19.5px;
  display: flex;
  align-items: center;
  justify-content: center;
  background: #d4d4d4;
  border-radius: 1px 0 0 1px;
}
.tab.on { background: #f2f2f2; }
.tab svg { width: 12px; height: 12px; }

.status {
  height: 11px;
  flex: none;
  display: flex;
  align-items: center;
  background: #e6e6e6;
  font-size: 7px;
  font-weight: 700;
  padding-left: 2px;
  position: relative;
}
.statustxt { flex: 1; }
.statusbox {
  position: absolute;
  left: 943px;
  top: 0;
  width: 24px;
  height: 11px;
  border-left: 1px solid #ccc;
  display: flex;
  align-items: center;
  padding-left: 10px;
  box-sizing: border-box;
}
.statusbox svg { width: 9px; height: 9px; }
.blackbar { flex: 1; background: #000; }

.dialog {
  position: absolute;
  left: 692px;
  top: 77px;
  width: 149px;
  height: 188px;
  display: flex;
  flex-direction: column;
  background: #e2e2e2;
  border-radius: 2px;
  font-size: 7px;
  box-shadow: 0 1px 2px rgba(0, 0, 0, .4);
}
.dlgtitle {
  flex: none;
  height: 11px;
  background: linear-gradient(#444, #111);
  color: #eee;
  display: flex;
  align-items: center;
  padding: 0 1px 0 2px;
  border-radius: 2px 2px 0 0;
  font-size: 6.8px;
}
.dlgring { width: 6px; height: 6px; border: 1.5px solid #ddd; border-radius: 50%; margin-right: 5px; box-sizing: border-box; }
.dlgname { flex: 1; }
.dlgbtn { width: 10px; text-align: center; color: #fff; font-size: 8px; line-height: 10px; }
.dlgbody {
  flex: 1;
  display: flex;
  flex-direction: column;
  padding: 3px 3px 0;
  min-height: 0;
}
.sechead {
  flex: none;
  height: 10px;
  display: flex;
  align-items: center;
  justify-content: space-between;
  background: linear-gradient(90deg, #e4e4e4, #f4f4f4 92%, #fff);
  font-weight: 700;
  padding: 0 3px;
  line-height: 10px;
}
.chev { font-size: 7px; font-weight: 700; color: #555; }
.secbody {
  flex: none;
  background: #c9c9c9;
  border: 1px solid #aaa;
  box-sizing: border-box;
  padding: 4px 4px 0;
  display: flex;
  flex-direction: column;
}
.secbody.first { height: 102px; background: #d2d2d2; }
.secbody.second { height: 20px; background: #c9c9c9; }
.second .bar { margin-top: 0; }
.frow {
  display: flex;
  align-items: center;
  justify-content: space-between;
  height: 11px;
  flex: none;
}
.frow label { font-weight: 400; }
.frow .dsel { width: 56px; height: 9px; }
.dsel {
  display: flex;
  align-items: center;
  background: #fff;
  border: 1px solid #888;
  box-sizing: border-box;
  overflow: hidden;
}
.dsel em { flex: 1; font-style: normal; padding-left: 2px; line-height: 8px; font-size: 6.5px; }
.dsel.blue { background: linear-gradient(#7ab8f4, #3d85e0); color: #fff; }
.dsel svg { width: 7px; height: 7px; margin-left: 3px; }
.pick {
  flex: none;
  height: 16px;
  margin: 3px 0 1px;
  display: flex;
  align-items: center;
  background: linear-gradient(90deg, #e9bc92, #dc9a64);
  border-radius: 2px;
  padding-left: 4px;
  position: relative;
}
.pick i { width: 3px; height: 3px; border-radius: 50%; background: #c02020; margin-right: 3px; }
.pick small { font-size: 6px; margin-left: 4px; color: #444; }
.pickbtn {
  position: absolute;
  right: 0;
  top: 0;
  width: 15px;
  height: 16px;
  box-sizing: border-box;
  background: linear-gradient(#f8c090, #ec8c40);
  border: 1px solid #777;
  display: flex;
  align-items: center;
  justify-content: center;
}
.pickbtn svg { width: 12px; height: 12px; }
.bar {
  flex: none;
  height: 10px;
  display: flex;
  align-items: center;
  justify-content: space-between;
  background: #b8b8b8;
  border: 1px solid #a4a4a4;
  box-sizing: border-box;
  padding: 0 3px 0 4px;
  font-weight: 700;
  margin-top: 2px;
}
.addset { height: 12px; margin-top: 2px; color: #a2a2a2; }
.addset + .bar { margin-top: 2px; }
.addbtn {
  width: 11px;
  height: 11px;
  background: #e8e8e8;
  border: 1px solid #aaa;
  box-sizing: border-box;
  font-size: 6px;
  line-height: 9px;
  text-align: center;
  color: #888;
}
.more {
  flex: none;
  height: 9px;
  background: #f2f2f2;
  text-align: center;
  font-weight: 700;
  font-size: 8px;
  line-height: 11px;
  letter-spacing: 1px;
  color: #333;
}
.dlgfoot {
  flex: 1;
  display: flex;
  justify-content: flex-end;
  align-items: center;
  gap: 4px;
  padding-right: 6px;
}
.dlgfoot button {
  width: 27px;
  height: 9px;
  padding: 0;
  font: inherit;
  font-size: 6.5px;
  line-height: 7px;
  font-weight: 700;
  color: #333;
  background: linear-gradient(#fafafa, #d8d8d8);
  border: 1px solid #777;
  border-radius: 2px;
}
.dlgfoot .ok { background: linear-gradient(#b6eea0, #58c050); border-color: #4a7a40; }
.dlgend { flex: none; height: 4px; background: #1a1a1a; border-radius: 0 0 2px 2px; }

.arrows {
  position: absolute;
  left: 0;
  top: 0;
  width: 990px;
  height: 556px;
  pointer-events: none;
}

.watermark {
  position: absolute;
  left: 765px;
  top: 14px;
  display: flex;
  align-items: center;
  pointer-events: none;
  opacity: .55;
  font-size: 44px;
  line-height: 52px;
  color: transparent;
  -webkit-text-stroke: 1px #fff;
  font-family: "Noto Sans CJK SC", sans-serif;
}
.wmlogo { width: 70px; height: 50px; margin-right: 2px; }
</style>

<style>
body { margin: 0; background: #000; }
</style>
